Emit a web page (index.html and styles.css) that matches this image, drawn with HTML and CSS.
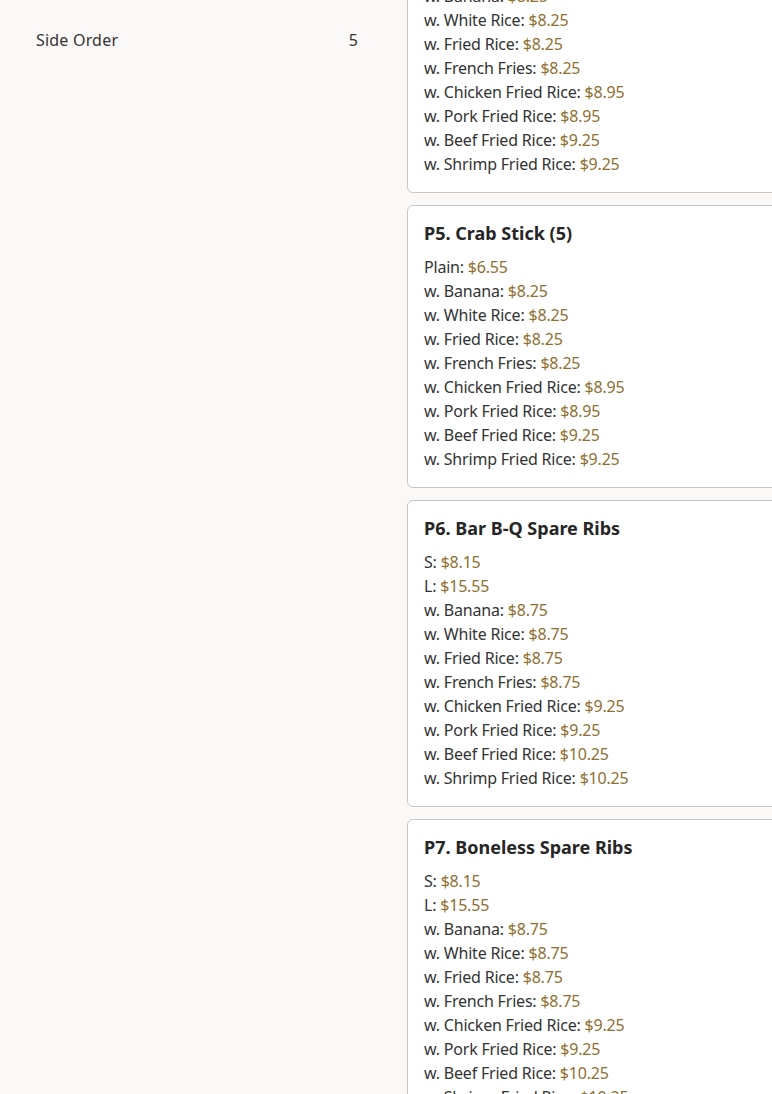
FILE: index.html
```html
<!DOCTYPE html>
<html lang="en">
<head>
<meta charset="utf-8">
<title>Menu</title>
<link rel="stylesheet" href="styles.css">
</head>
<body>
<div class="layout">
  <aside class="sidebar">
    <ul class="cats">
      <li class="cat"><span>Side Order</span><span class="count">5</span></li>
    </ul>
  </aside>
  <main class="menu">
    <section class="card">
      <h3 class="title">P4. Egg Roll (5)</h3>
      <ul class="prices">
        <li>Plain: <span class="p">$6.55</span></li>
        <li>w. Banana: <span class="p">$8.25</span></li>
        <li>w. White Rice: <span class="p">$8.25</span></li>
        <li>w. Fried Rice: <span class="p">$8.25</span></li>
        <li>w. French Fries: <span class="p">$8.25</span></li>
        <li>w. Chicken Fried Rice: <span class="p">$8.95</span></li>
        <li>w. Pork Fried Rice: <span class="p">$8.95</span></li>
        <li>w. Beef Fried Rice: <span class="p">$9.25</span></li>
        <li>w. Shrimp Fried Rice: <span class="p">$9.25</span></li>
      </ul>
    </section>
    <section class="card">
      <h3 class="title">P5. Crab Stick (5)</h3>
      <ul class="prices">
        <li>Plain: <span class="p">$6.55</span></li>
        <li>w. Banana: <span class="p">$8.25</span></li>
        <li>w. White Rice: <span class="p">$8.25</span></li>
        <li>w. Fried Rice: <span class="p">$8.25</span></li>
        <li>w. French Fries: <span class="p">$8.25</span></li>
        <li>w. Chicken Fried Rice: <span class="p">$8.95</span></li>
        <li>w. Pork Fried Rice: <span class="p">$8.95</span></li>
        <li>w. Beef Fried Rice: <span class="p">$9.25</span></li>
        <li>w. Shrimp Fried Rice: <span class="p">$9.25</span></li>
      </ul>
    </section>
    <section class="card">
      <h3 class="title">P6. Bar B-Q Spare Ribs</h3>
      <ul class="prices">
        <li>S: <span class="p">$8.15</span></li>
        <li>L: <span class="p">$15.55</span></li>
        <li>w. Banana: <span class="p">$8.75</span></li>
        <li>w. White Rice: <span class="p">$8.75</span></li>
        <li>w. Fried Rice: <span class="p">$8.75</span></li>
        <li>w. French Fries: <span class="p">$8.75</span></li>
        <li>w. Chicken Fried Rice: <span class="p">$9.25</span></li>
        <li>w. Pork Fried Rice: <span class="p">$9.25</span></li>
        <li>w. Beef Fried Rice: <span class="p">$10.25</span></li>
        <li>w. Shrimp Fried Rice: <span class="p">$10.25</span></li>
      </ul>
    </section>
    <section class="card">
      <h3 class="title">P7. Boneless Spare Ribs</h3>
      <ul class="prices">
        <li>S: <span class="p">$8.15</span></li>
        <li>L: <span class="p">$15.55</span></li>
        <li>w. Banana: <span class="p">$8.75</span></li>
        <li>w. White Rice: <span class="p">$8.75</span></li>
        <li>w. Fried Rice: <span class="p">$8.75</span></li>
        <li>w. French Fries: <span class="p">$8.75</span></li>
        <li>w. Chicken Fried Rice: <span class="p">$9.25</span></li>
        <li>w. Pork Fried Rice: <span class="p">$9.25</span></li>
        <li>w. Beef Fried Rice: <span class="p">$10.25</span></li>
        <li>w. Shrimp Fried Rice: <span class="p">$10.25</span></li>
      </ul>
    </section>
  </main>
</div>
</body>
</html>
```
FILE: styles.css
```css
html, body {
  margin: 0;
  padding: 0;
  background: #faf9f7;
  overflow: hidden;
}
body {
  font-family: "Noto Sans", "Open Sans", sans-serif;
  font-size: 16px;
  line-height: 24px;
  color: #333;
}
.layout {
  display: flex;
  gap: 33px;
  padding-left: 20px;
  align-items: flex-start;
}
.sidebar {
  flex: 0 0 354px;
  padding-top: 20px;
}
.cats {
  list-style: none;
  margin: 0;
  padding: 0;
}
.cat {
  display: flex;
  justify-content: space-between;
  padding: 8px 16px;
  color: #333;
  letter-spacing: 0.2px;
}
.menu {
  flex: 0 0 420px;
  display: flex;
  flex-direction: column;
  gap: 12px;
  margin-top: -90px;
}
.card {
  background: #fff;
  border: 1px solid #c9c7c3;
  border-radius: 6px;
  padding: 16px;
}
.title {
  margin: 0 0 11px;
  font-size: 18px;
  line-height: 22px;
  font-weight: 700;
  color: #262626;
}
.prices {
  list-style: none;
  margin: 0;
  padding: 0;
  letter-spacing: -0.2px;
}
.p {
  color: #8f6f31;
}
```
